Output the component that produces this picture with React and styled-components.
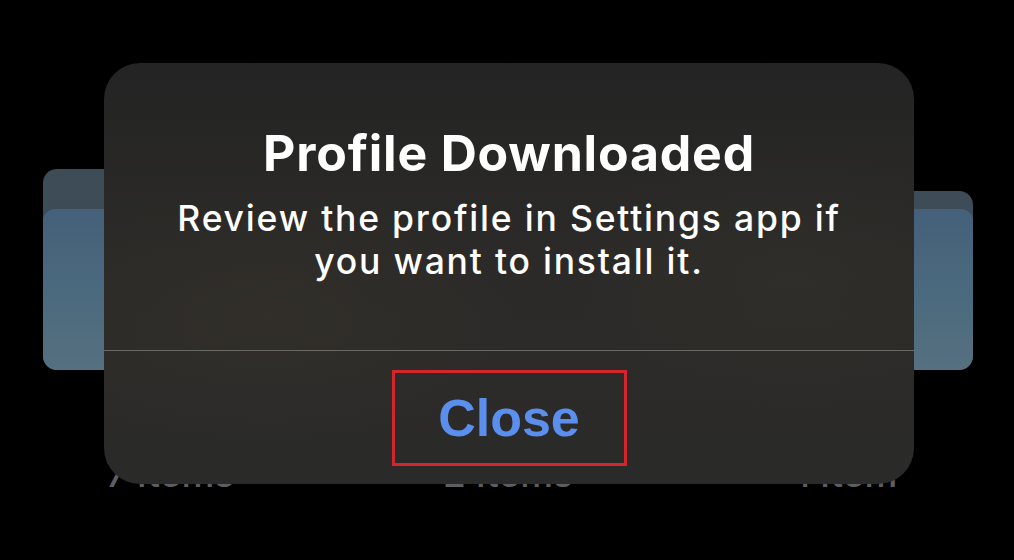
import React from "react";
import styled, { createGlobalStyle } from "styled-components";

const Global = createGlobalStyle`
  html, body { margin: 0; padding: 0; background: #000; }
  body { font-family: Inter, "Noto Sans", sans-serif; -webkit-font-smoothing: antialiased; }
`;

const Screen = styled.div`
  position: relative;
  width: 1014px;
  height: 560px;
  background: #000;
  overflow: hidden;
`;

const Folders = styled.div`
  display: flex;
  gap: 84px;
  padding: 169px 0 0 43px;
`;

const Folder = styled.div`
  width: 254px;
  display: flex;
  flex-direction: column;
  align-items: center;
`;

const Stack = styled.div`
  width: 100%;
  height: 201px;
  display: flex;
  flex-direction: column;
  justify-content: flex-end;
`;

const BackCard = styled.div`
  width: 100%;
  height: ${(p) => p.$h}px;
  background: linear-gradient(180deg, #3d4c56 0%, #3b4b55 100%);
  border-radius: 14px;
  display: flex;
  flex-direction: column;
  justify-content: flex-end;
`;

const FrontCard = styled.div`
  width: 100%;
  height: 161px;
  background: linear-gradient(180deg, #44607a 0%, #4c6a7e 55%, #55707f 100%);
  border-radius: 12px 12px 14px 14px;
`;

const Label = styled.div`
  margin-top: 82px;
  font-size: 37px;
  font-weight: 500;
  color: #5e5e62;
  line-height: 44px;
`;

const Dialog = styled.div`
  position: absolute;
  left: 104px;
  top: 63px;
  width: 810px;
  height: 421px;
  border-radius: 36px;
  overflow: hidden;
  background:
    radial-gradient(ellipse 45% 45% at 20% 60%, rgba(70, 60, 40, 0.22), transparent 70%),
    radial-gradient(ellipse 40% 45% at 85% 50%, rgba(65, 58, 45, 0.2), transparent 70%),
    linear-gradient(180deg, #242424 0%, #2b2a28 45%, #2c2b29 70%, #2a2a2a 100%);
  display: flex;
  flex-direction: column;
`;

const Body = styled.div`
  height: 288px;
  box-sizing: border-box;
  padding-top: 61px;
  display: flex;
  flex-direction: column;
  align-items: center;
  text-align: center;
  color: #fff;
  border-bottom: 1px solid #6a6964;
`;

const Title = styled.div`
  font-size: 50px;
  font-weight: 700;
  line-height: 58px;
  letter-spacing: 0.8px;
`;

const Message = styled.div`
  margin-top: 15px;
  font-size: 35.5px;
  font-weight: 500;
  line-height: 43px;
  letter-spacing: 1.8px;
  max-width: 720px;
`;

const Footer = styled.div`
  flex: 1;
  display: flex;
  align-items: center;
  justify-content: center;
`;

const CloseButton = styled.button`
  width: 235px;
  height: 96px;
  box-sizing: border-box;
  border: 3px solid #d2252c;
  background: transparent;
  color: #5b8fee;
  font-family: "Liberation Sans", Arial, sans-serif;
  font-size: 52px;
  font-weight: 700;
  padding: 0;
  cursor: pointer;
`;

export default function App() {
  return (
    <Screen>
      <Global />
      <Folders>
        <Folder>
          <Stack>
            <BackCard $h={201}>
              <FrontCard />
            </BackCard>
          </Stack>
          <Label>7 Items</Label>
        </Folder>
        <Folder>
          <Stack>
            <BackCard $h={190}>
              <FrontCard />
            </BackCard>
          </Stack>
          <Label>2 Items</Label>
        </Folder>
        <Folder>
          <Stack>
            <BackCard $h={179}>
              <FrontCard />
            </BackCard>
          </Stack>
          <Label>1 Item</Label>
        </Folder>
      </Folders>
      <Dialog>
        <Body>
          <Title>Profile Downloaded</Title>
          <Message>Review the profile in Settings app if you want to install it.</Message>
        </Body>
        <Footer>
          <CloseButton>Close</CloseButton>
        </Footer>
      </Dialog>
    </Screen>
  );
}
